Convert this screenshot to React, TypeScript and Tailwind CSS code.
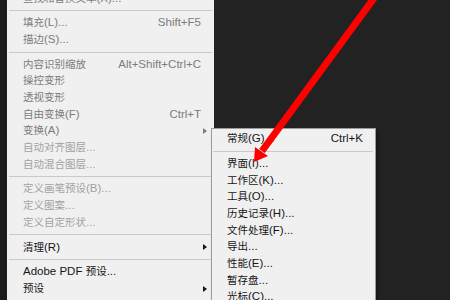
import React from "react"

type Item =
  | { sep: true }
  | { label: string; shortcut?: string; sub?: boolean; tone?: "on" | "dim" | "faint" }

const mainMenu: Item[] = [
  { label: "查找和替换文本(X)...", tone: "dim" },
  { sep: true },
  { label: "填充(L)...", shortcut: "Shift+F5", tone: "dim" },
  { label: "描边(S)...", tone: "dim" },
  { sep: true },
  { label: "内容识别缩放", shortcut: "Alt+Shift+Ctrl+C", tone: "dim" },
  { label: "操控变形", tone: "dim" },
  { label: "透视变形", tone: "dim" },
  { label: "自由变换(F)", shortcut: "Ctrl+T", tone: "dim" },
  { label: "变换(A)", sub: true, tone: "dim" },
  { label: "自动对齐图层...", tone: "faint" },
  { label: "自动混合图层...", tone: "faint" },
  { sep: true },
  { label: "定义画笔预设(B)...", tone: "faint" },
  { label: "定义图案...", tone: "faint" },
  { label: "定义自定形状...", tone: "faint" },
  { sep: true },
  { label: "清理(R)", sub: true },
  { sep: true },
  { label: "Adobe PDF 预设..." },
  { label: "预设", sub: true },
  { label: "远程连接...", tone: "faint" },
]

const prefsMenu: Item[] = [
  { label: "常规(G)...", shortcut: "Ctrl+K" },
  { sep: true },
  { label: "界面(I)..." },
  { label: "工作区(K)..." },
  { label: "工具(O)..." },
  { label: "历史记录(H)..." },
  { label: "文件处理(F)..." },
  { label: "导出..." },
  { label: "性能(E)..." },
  { label: "暂存盘..." },
  { label: "光标(C)..." },
]

// CJK glyphs in the shot are narrower than the latin ones, so size them apart
function Label({ text }: { text: string }) {
  const parts = text.split(/([\u3000-\u9fff\uff00-\uffef]+)/)
  return (
    <>
      {parts.map((p, i) =>
        /[\u3000-\u9fff]/.test(p) ? (
          <span key={i} className="text-[10.5px]">
            {p}
          </span>
        ) : (
          <span key={i}>{p}</span>
        )
      )}
    </>
  )
}

const toneClass = {
  on: "text-[#161616]",
  dim: "text-[#7c7c7c]",
  faint: "text-[#a2a2a2]",
}

function MenuRows({ items, sepInset }: { items: Item[]; sepInset: string }) {
  return (
    <>
      {items.map((item, i) =>
        "sep" in item ? (
          <div key={i} className={`h-[8px] flex items-center ${sepInset}`}>
            <div className="h-px w-full bg-[#cacaca]" />
          </div>
        ) : (
          <div
            key={i}
            className={`h-[16.7px] flex items-center whitespace-nowrap ${toneClass[item.tone ?? "on"]}`}
          >
            <div className="flex-1">
              <Label text={item.label} />
            </div>
            {item.shortcut && <div>{item.shortcut}</div>}
            {item.sub !== undefined && (
              <div className="w-[6px] flex justify-end">
                {item.sub && (
                  <div
                    className={`w-0 h-0 border-y-[3.5px] border-y-transparent border-l-[4px] ${
                      item.tone === "dim" ? "border-l-[#7c7c7c]" : "border-l-[#161616]"
                    }`}
                  />
                )}
              </div>
            )}
          </div>
        )
      )}
    </>
  )
}

export default function App() {
  const main = mainMenu.map((m) =>
    "sep" in m ? m : { ...m, sub: m.sub ?? false }
  )

  return (
    <div
      className="relative w-[450px] h-[300px] overflow-hidden bg-[#222222] flex text-[11.5px] leading-none"
      style={{ fontFamily: '"Liberation Sans", "Noto Sans CJK SC", sans-serif' }}
    >
      <div className="w-[7px] bg-[#1c1c1c]" />

      {/* Edit menu */}
      <div className="w-[207px] bg-[#f0f0f0] flex flex-col">
        <div className="mt-[-10px] pl-[16px] pr-[7px] flex flex-col">
          <MenuRows items={main} sepInset="-ml-[14px] -mr-[5px]" />
        </div>
      </div>

      {/* Preferences submenu */}
      <div className="absolute left-[211px] top-[128px] w-[165px] h-[200px] border border-[#9c9c9c] bg-[#f0f0f0] shadow-[2px_2px_3px_rgba(0,0,0,0.35)]">
        <div className="pt-[1.6px] pl-[15px] pr-[12px] flex flex-col">
          <MenuRows items={prefsMenu} sepInset="-ml-[14px] -mr-[10px]" />
        </div>
      </div>

      {/* red annotation arrow */}
      <svg
        className="absolute inset-0 pointer-events-none"
        width="450"
        height="300"
        viewBox="0 0 450 300"
      >
        <line x1="380" y1="-10" x2="262" y2="151" stroke="#ff0000" strokeWidth="7" />
        <polygon points="254,162 268,156 255,147" fill="#ff0000" />
      </svg>
    </div>
  )
}
